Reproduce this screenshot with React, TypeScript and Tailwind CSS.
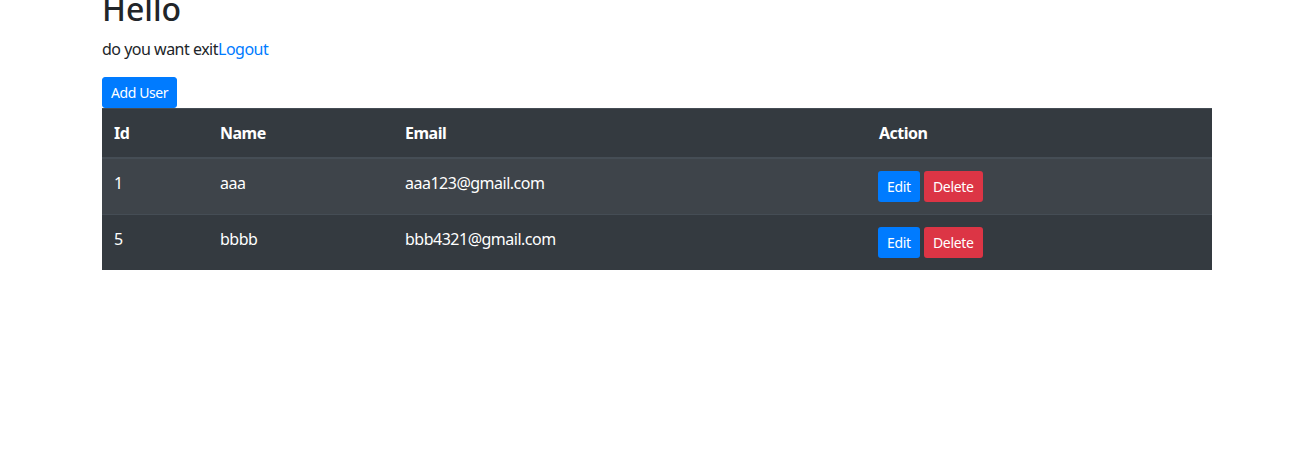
import React from 'react';

interface User {
  id: number;
  name: string;
  email: string;
}

const users: User[] = [
  { id: 1, name: 'aaa', email: 'aaa123@gmail.com' },
  { id: 5, name: 'bbbb', email: 'bbb4321@gmail.com' },
];

const font = { fontFamily: '"Noto Sans", "Open Sans", sans-serif' };

const App: React.FC = () => {
  return (
    <div className="bg-white min-h-[473px] text-[#212529] text-base tracking-[-0.5px]" style={font}>
      <div className="ml-[102px] w-[1110px]">
        <h1 className="-mt-[10px] mb-[9px] text-[32px] leading-[38px] font-medium tracking-normal">Hello</h1>
        <p className="mb-4 leading-6">
          do you want exit<a href="#" className="text-[#007bff]">Logout</a>
        </p>
        <button className="h-[31px] px-2 text-sm leading-[21px] text-white bg-[#007bff] rounded-[3px] border border-[#007bff] align-top tracking-[-0.4px]">
          Add User
        </button>
        <table className="w-full bg-[#343a40] text-white">
          <thead>
            <tr className="border-t border-[#454d55] border-b-2">
              <th className="w-[106px] text-left font-bold px-3 py-3 leading-6">Id</th>
              <th className="w-[185px] text-left font-bold px-3 py-3 leading-6">Name</th>
              <th className="w-[474px] text-left font-bold px-3 py-3 leading-6">Email</th>
              <th className="text-left font-bold px-3 py-3 leading-6">Action</th>
            </tr>
          </thead>
          <tbody>
            {users.map((u, i) => (
              <tr key={u.id} className={`border-t border-[#454d55] ${i % 2 === 0 ? 'bg-[#3e444a]' : ''}`}>
                <td className="px-3 py-3 leading-6 align-top">{u.id}</td>
                <td className="px-3 py-3 leading-6 align-top">{u.name}</td>
                <td className="px-3 py-3 leading-6 align-top">{u.email}</td>
                <td className="pl-[11px] pr-3 py-3 leading-6 align-top">
                  <div className="flex gap-1">
                    <button className="h-[31px] px-[9px] text-sm leading-[21px] text-white bg-[#007bff] rounded-[3px] tracking-[-0.3px]">Edit</button>
                    <button className="h-[31px] px-[9px] text-sm leading-[21px] text-white bg-[#dc3545] rounded-[3px] tracking-[-0.3px]">Delete</button>
                  </div>
                </td>
              </tr>
            ))}
          </tbody>
        </table>
      </div>
    </div>
  );
};

export default App;
